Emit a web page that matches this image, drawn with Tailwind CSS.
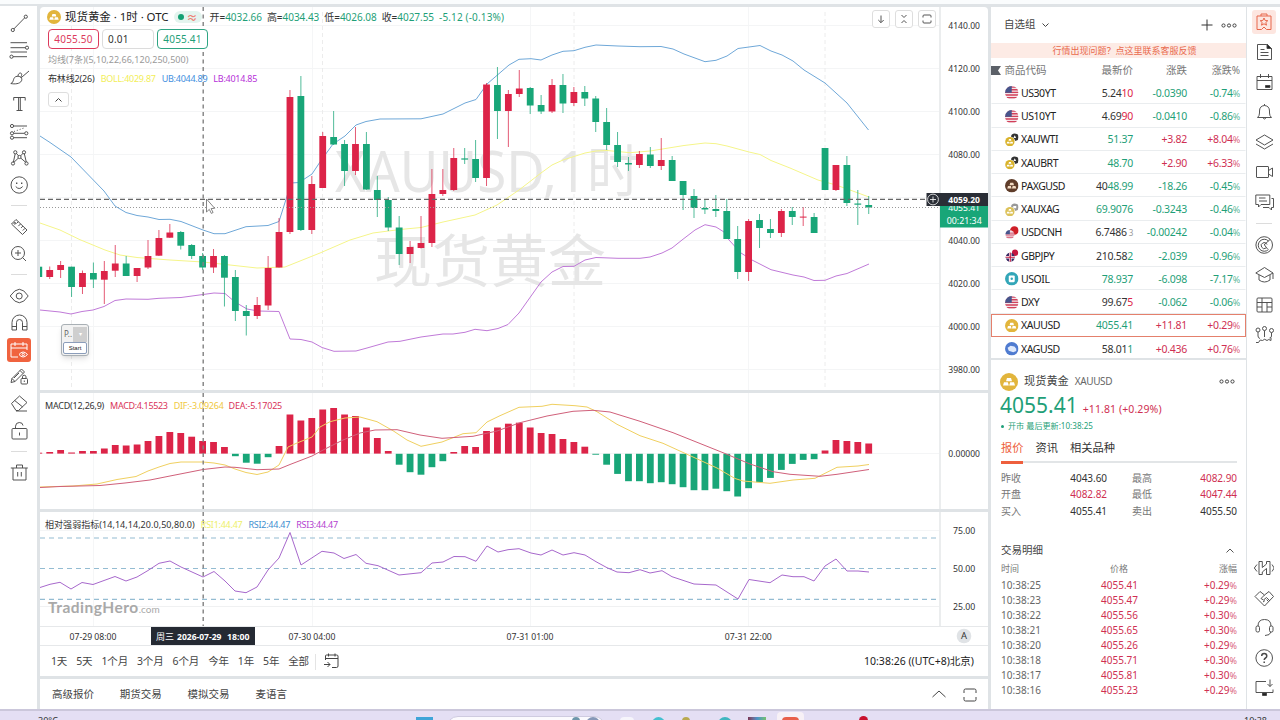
<!DOCTYPE html>
<html lang="zh-CN">
<head>
  <meta charset="UTF-8" />
  <meta name="viewport" content="width=device-width, initial-scale=1.0"/>
  <title>XAUUSD 现货黄金</title>
  <script src="https://cdn.jsdelivr.net/npm/@tailwindcss/browser@4"></script>
</head>
<body class="w-[1280px] h-[720px] overflow-hidden flex flex-col bg-[#dfe3e6] text-[#333] whitespace-nowrap font-['Noto_Sans','Noto_Sans_CJK_SC',sans-serif]">

  <div class="h-1 bg-[#fafcfd] shrink-0"></div>

  <div class="h-[705px] pt-[3px] flex shrink-0">

    <!-- drawing tools -->
    <div id="tools" class="w-[37px] mr-[3px] -mt-px pt-[3px] bg-white flex flex-col items-center"></div>

    <!-- chart column -->
    <div class="w-[948px] flex flex-col">
      <div class="h-[383px] flex bg-white relative rounded-t-sm overflow-hidden">
        <svg id="pricePane" class="w-[899px] h-[383px]" viewBox="40 7 899 383"></svg>
        <svg id="priceAxis" class="w-[49px] h-[383px]" viewBox="939 7 49 383"></svg>

        <div class="absolute left-2 top-[2px] leading-none">
          <div class="h-4 flex items-center">
            <svg class="size-[14px] -ml-[1px]" viewBox="0 0 18 18"><use href="#gold"/></svg>
            <span class="ml-[4px] text-[11.5px] tracking-[-0.05px] text-[#222]">现货黄金 · 1时 · OTC</span>
            <span class="ml-[5px] w-7 h-[12px] rounded-full bg-[#e3f4ee] flex items-center justify-between px-1">
              <i class="size-[6px] rounded-full bg-[#14a073]"></i>
              <b class="text-[11px] leading-none text-[#ee8074]">≈</b>
            </span>
            <span class="ml-[8px] text-[10px] tracking-[-0.04px]">开=<span class="text-[#1f9f78]">4032.66</span></span>
            <span class="ml-[5px] text-[10px] tracking-[-0.04px]">高=<span class="text-[#1f9f78]">4034.43</span></span>
            <span class="ml-[5px] text-[10px] tracking-[-0.04px]">低=<span class="text-[#1f9f78]">4026.08</span></span>
            <span class="ml-[5px] text-[10px] tracking-[-0.04px]">收=<span class="text-[#1f9f78]">4027.55</span></span>
            <span class="ml-[5px] text-[10px] tracking-[0.15px] text-[#1f9f78]">-5.12 (-0.13%)</span>
          </div>
          <div class="mt-1 flex gap-[3px] text-[10px] tracking-[0.2px]">
            <div class="w-[51px] h-5 rounded border border-[#dd3a5c] text-[#dd3a5c] bg-white flex items-center justify-center">4055.50</div>
            <div class="w-[52px] h-5 rounded border border-[#dcdcdc] bg-white flex items-center pl-[5px]">0.01</div>
            <div class="w-[51px] h-5 rounded border border-[#2fa583] text-[#1f9f78] bg-white flex items-center justify-center">4055.41</div>
          </div>
          <div class="mt-[4px] h-3 flex items-center text-[9px] tracking-[0.02px] text-[#999]">均线(7条)(5,10,22,66,120,250,500)</div>
          <div class="mt-[7px] h-3 flex items-center text-[9px] tracking-[-0.15px]">
            <span>布林线2(26)</span>
            <span class="ml-[6px] tracking-[-0.25px] text-[#f2ee58]">BOLL:4029.87</span>
            <span class="ml-[6px] tracking-[-0.25px] text-[#3f8fe0]">UB:4044.89</span>
            <span class="ml-[6px] tracking-[-0.25px] text-[#b62fd8]">LB:4014.85</span>
          </div>
          <div class="mt-2 w-[21px] h-[15px] rounded-[3px] border border-[#dedede] bg-white flex items-center justify-center">
            <svg class="w-[7px] h-[4px] fill-none stroke-[#444]" viewBox="0 0 7 4"><path d="M.5 3.5l3-3 3 3"/></svg>
          </div>
        </div>

        <!-- pane buttons -->
        <div class="absolute left-[832px] top-[3px] flex gap-[5px]">
          <div class="size-[18px] rounded-[3px] border border-[#dedede] bg-white"><svg class="size-4 fill-none stroke-[#555]" viewBox="0 0 16 16"><path d="M8 4.5v7M5.3 9L8 11.7 10.7 9"/></svg></div>
          <div class="size-[18px] rounded-[3px] border border-[#dedede] bg-white"><svg class="size-4 fill-none stroke-[#555]" viewBox="0 0 16 16"><path d="M5.5 4L8 6.5 10.5 4M5.5 12L8 9.5 10.5 12"/></svg></div>
          <div class="size-[18px] rounded-[3px] border border-[#dedede] bg-white"><svg class="size-4 fill-none stroke-[#555]" viewBox="0 0 16 16"><path d="M4 6.5V5q0-1 1-1h6q1 0 1 1v1.5M4 9.5V11q0 1 1 1h6q1 0 1-1V9.5"/></svg></div>
        </div>

        <!-- floating recorder widget -->
        <div class="absolute left-[21px] top-[317px] w-[28px] h-[32px] rounded-[3px] bg-[#f2f2f2] border border-[#a9b0b5] shadow-md p-px">
          <div class="h-[16px] flex items-center justify-between text-[8px] leading-none text-[#666]"><span class="pl-px">P..</span><span class="w-[14px] h-[15px] bg-[#cfcfcf] text-white text-center text-[6px] leading-[14px]">▾</span></div>
          <div class="h-[12px] rounded-[2px] border border-[#8b9dba] bg-white text-[6px] leading-[11px] text-center text-[#222] font-['Liberation_Sans']">Start</div>
        </div>
      </div>

      <div class="h-[116px] mt-[3px] flex bg-white relative">
        <svg id="macdPane" class="w-[899px] h-[116px]" viewBox="40 393 899 116"></svg>
        <svg id="macdAxis" class="w-[49px] h-[116px]" viewBox="939 393 49 116"></svg>
        <div class="absolute left-[5px] top-[7px] h-3 flex items-center text-[9px] tracking-[-0.22px]">
          <span>MACD(12,26,9)</span>
          <span class="ml-[6px] tracking-[-0.35px] text-[#d93358]">MACD:4.15523</span>
          <span class="ml-[6px] tracking-[-0.25px] text-[#f0c83c]">DIF:-3.09264</span>
          <span class="ml-[5px] tracking-[-0.2px] text-[#d93358]">DEA:-5.17025</span>
        </div>
      </div>

      <div class="h-[114px] mt-[3px] flex bg-white relative">
        <svg id="rsiPane" class="w-[899px] h-[114px]" viewBox="40 512 899 114"></svg>
        <svg id="rsiAxis" class="w-[49px] h-[114px]" viewBox="939 512 49 114"></svg>
        <div class="absolute left-[5px] top-[7px] h-3 flex items-center text-[9px] tracking-[0.05px]">
          <span>相对强弱指标(14,14,14,20.0,50,80.0)</span>
          <span class="ml-[6px] tracking-[-0.25px] text-[#eef06a]">RSI1:44.47</span>
          <span class="ml-[6px] tracking-[-0.25px] text-[#3f8fd0]">RSI2:44.47</span>
          <span class="ml-[6px] tracking-[-0.25px] text-[#b33fd0]">RSI3:44.47</span>
        </div>
        <div class="absolute left-2 top-[88px] leading-none text-[#a9a9a9] flex items-baseline">
          <b class="text-[15.5px] tracking-[0.5px] font-['Lato']">TradingHero</b><span class="text-[10px] font-['Lato']">.com</span>
        </div>
      </div>

      <svg id="timeAxis" class="w-[948px] h-[20px] bg-white shrink-0" viewBox="40 626 948 20"></svg>

      <div class="h-[30px] bg-white flex items-center pt-[2px] pl-[11px] pr-[14px] text-[10.5px] text-[#444]">
        <div class="flex gap-[9px] tracking-[-0.15px]">
          <span>1天</span><span>5天</span><span>1个月</span><span>3个月</span><span>6个月</span><span>今年</span><span>1年</span><span>5年</span><span>全部</span>
        </div>
        <i class="w-px h-4 bg-[#e4e4e4] ml-[6px]"></i>
        <svg class="ml-[6px] -mt-[2px] size-[18px] fill-none stroke-[#444]" viewBox="0 0 18 18"><path d="M3.5 8V4q0-1 1-1h10q1.5 0 1.5 1v10q0 1.5-1.5 1.5H10M3.5 6.5H16M6.5 1.5v3M13 1.5v3M2 12.5h6M5.5 10L8 12.5 5.5 15"/></svg>
        <span class="ml-auto text-[10.5px] text-[#222] tracking-[0px]">10:38:26 ((UTC+8)北京)</span>
      </div>

      <div class="h-[30px] mt-[3px] bg-white flex items-center pt-[2px] pl-3 pr-[11px] text-[10.5px] text-[#444]">
        <div class="flex gap-[25.8px]"><span>高级报价</span><span>期货交易</span><span>模拟交易</span><span>麦语言</span></div>
        <svg class="ml-auto -mt-[2px] w-[14px] h-2 fill-none stroke-[#444]" viewBox="0 0 14 8"><path d="M.5 7L7 1l6.5 6"/></svg>
        <svg class="ml-[17px] size-[14px] fill-none stroke-[#444]" viewBox="0 0 14 14"><path d="M1 5V2.5Q1 1 2.5 1h9Q13 1 13 2.5V5M1 9v2.5Q1 13 2.5 13h9q1.5 0 1.5-1.5V9"/></svg>
      </div>
    </div>

    <!-- watch list and quote -->
    <div class="w-[255px] ml-[3px] flex flex-col">
      <div class="h-[351px] bg-white overflow-hidden">
        <div class="h-[36px] flex items-center px-[13px] text-[10.5px] text-[#444]">
          <span>自选组</span>
          <svg class="ml-[6px] w-[7px] h-[5px] fill-none stroke-[#444]" viewBox="0 0 7 5"><path d="M.5 .5l3 3 3-3"/></svg>
          <svg class="ml-auto size-3 fill-none stroke-[#333]" viewBox="0 0 12 12"><path d="M6 .5v11M.5 6h11"/></svg>
          <svg class="ml-[8px] -mr-[4px] w-[16px] h-[5px] fill-none stroke-[#444]" viewBox="0 0 16 5"><circle cx="2.5" cy="2.5" r="1.6"/><circle cx="8" cy="2.5" r="1.6"/><circle cx="13.5" cy="2.5" r="1.6"/></svg>
        </div>
        <div class="h-[15px] bg-[#fdebe5] text-[#e9694c] text-[9px] flex items-center justify-center pl-3">行情出现问题？点这里联系客服反馈</div>
        <div class="h-[23px] flex items-center pt-[2px] text-[10.5px] text-[#777] pr-[6px]">
          <svg class="w-[10px] h-[9px] fill-[#5b6068]" viewBox="0 0 10 9"><path d="M0 0h10L7 4.5 10 9H0z"/></svg>
          <span class="w-[78px] pl-[3.5px]">商品代码</span>
          <span class="w-[54px] text-right">最新价</span>
          <span class="w-[54px] text-right">涨跌</span>
          <span class="grow text-right text-[10px]">涨跌%</span>
        </div>
        <div id="watchList"></div>
      </div>

      <div class="grow mt-[2px] bg-white pl-[10px] pr-[9px]">
        <div class="h-[35px] pt-[8px] flex items-center text-[#444]">
          <svg class="size-[18px] -ml-[1px]" viewBox="0 0 18 18"><use href="#gold"/></svg>
          <span class="ml-[6px] text-[11.2px]">现货黄金</span>
          <span class="ml-[6px] text-[10px] tracking-[-0.4px] text-[#666]">XAUUSD</span>
          <svg class="ml-auto mr-[2px] w-[16px] h-[5px] fill-none stroke-[#444]" viewBox="0 0 16 5"><circle cx="2.5" cy="2.5" r="1.6"/><circle cx="8" cy="2.5" r="1.6"/><circle cx="13.5" cy="2.5" r="1.6"/></svg>
        </div>
        <div class="h-[18px] flex items-end leading-none">
          <span class="-ml-px text-[21px] leading-[16px] text-[#1f9f78]">4055.41</span>
          <span class="ml-[5px] text-[10.5px] leading-[7px] tracking-[0.1px] text-[#cf2f52]">+11.81 (+0.29%)</span>
        </div>
        <div class="h-[15px] mt-[5.5px] flex items-center text-[8.1px] text-[#1f9f78]"><i class="size-[3px] rounded-full bg-[#1f9f78] mr-[4px]"></i>开市 最后更新:10:38:25</div>
        <div class="h-[22px] mt-[4px] flex items-center gap-[12px] text-[11.25px] text-[#333]"><span class="text-[#ee5f3d]">报价</span><span>资讯</span><span>相关品种</span></div>
        <div class="h-[2px] mt-[2px] bg-[#e2e5e7]"><div class="w-[22px] h-[3px] -mt-px bg-[#ee5f3d]"></div></div>
        <div class="mt-[7.5px] grid grid-cols-[40px_66px_25px_1fr] auto-rows-[16.5px] items-center text-[10px] tracking-[-0.05px]">
          <span class="text-[#777]">昨收</span><span class="text-right">4043.60</span><span></span><div class="flex justify-between"><span class="text-[#777]">最高</span><span class="text-[#cf2f52]">4082.90</span></div>
          <span class="text-[#777]">开盘</span><span class="text-right text-[#cf2f52]">4082.82</span><span></span><div class="flex justify-between"><span class="text-[#777]">最低</span><span class="text-[#cf2f52]">4047.44</span></div>
          <span class="text-[#777]">买入</span><span class="text-right">4055.41</span><span></span><div class="flex justify-between"><span class="text-[#777]">卖出</span><span>4055.50</span></div>
        </div>
        <div class="mt-[22.5px] h-[17px] flex items-center justify-between text-[10.5px] text-[#444]">
          <span>交易明细</span>
          <svg class="mr-[3px] w-[8px] h-[5px] fill-none stroke-[#555]" viewBox="0 0 8 5"><path d="M.5 4.5L4 1l3.5 3.5"/></svg>
        </div>
        <div class="h-[18.5px] flex items-center text-[9px] text-[#777]"><span class="w-[118px]">时间</span><span class="-ml-[9px]">价格</span><span class="ml-auto">涨幅</span></div>
        <div id="ticks"></div>
      </div>
    </div>

    <div id="side" class="grow ml-px bg-white flex flex-col items-center"></div>
  </div>

  <!-- taskbar, cut by the bottom of the screen -->
  <div class="h-[11px] shrink-0 overflow-hidden border-t-2 border-[#cbc7db] bg-[#e4dff4] relative">
    <span class="absolute left-[38px] top-[5px] text-[9px] leading-[9px]">30°C</span>
    <div class="absolute left-[416px] top-[6px] w-[17px] h-4 bg-[#3fa5d8]"></div>
    <div class="absolute left-[446px] top-[5px] w-[160px] h-6 rounded-full bg-[#fbfafe] border border-[#cfcbe0]"></div>
    <div class="absolute left-[572px] top-[6px] w-[8px] h-4 rounded-full bg-[#6f97ab]"></div>
    <div class="absolute left-[586px] top-[6px] w-[14px] h-4 rounded-full bg-[#8798b8]"></div>
    <div class="absolute left-[620px] top-[6px] w-[14px] h-4 rounded bg-[#f6f5fb]"></div>
    <div class="absolute left-[652px] top-[6px] w-[13px] h-4 rounded-full bg-[#43c0d0]"></div>
    <div class="absolute left-[682px] top-[6px] w-[8px] h-4 rounded-full bg-[#b9a94e]"></div>
    <div class="absolute left-[718px] top-[6px] w-[14px] h-4 rounded-full bg-[#3fb6c0]"></div>
    <div class="absolute left-[748px] top-[6px] w-[18px] h-4 bg-linear-to-r from-[#7a3555] via-[#4a90c8] to-[#79c06a]"></div>
    <div class="absolute left-[777px] top-[1px] w-[27px] h-6 rounded bg-[#f7f1f6]"></div>
    <div class="absolute left-[782px] top-[6px] w-[17px] h-4 rounded-sm bg-[#e8604a]"></div>
    <div class="absolute left-[859px] top-[5px] size-[9px] rounded-full bg-[#c8102e]"></div>
    <span class="absolute left-[1244px] top-[5px] text-[9px] leading-[9px]">10:38</span>
  </div>

  <!-- shared symbols -->
  <svg class="absolute size-0">
    <clipPath id="round"><circle cx="9" cy="9" r="9"/></clipPath>
    <symbol id="gold" viewBox="0 0 18 18"><circle cx="9" cy="9" r="9" fill="#e2b53c"/><path d="M7 5h4l1 3.2H6zM4 9.3h3.8l1 3.2H3zM10.2 9.3H14l1 3.2H9.2z" fill="#fff"/></symbol>
    <symbol id="silver" viewBox="0 0 18 18"><circle cx="9" cy="9" r="9" fill="#4f7bd0"/><path d="M3.5 7.5l4-2.5 5 1 2.5 3v3l-4 1.500-6-2z" fill="#dfe9fb"/></symbol>
    <symbol id="us" viewBox="0 0 18 18"><g clip-path="url(#round)"><path d="M0 0h18v18H0z" fill="#f3e6ea"/><path d="M0 1.5h18M0 5h18M0 8.5h18M0 12h18M0 15.5h18" stroke="#d2405a" stroke-width="1.7"/><path d="M0 0h9v9H0z" fill="#47558c"/></g></symbol>
    <symbol id="golddark" viewBox="0 0 18 18"><circle cx="13" cy="5.5" r="5" fill="#333"/><path d="M13 3l1.8 3.5h-3.6z" fill="#fff"/><circle cx="6.5" cy="11.5" r="7" fill="#fff"/><circle cx="6.5" cy="11.5" r="6.2" fill="#d9b32c"/><path d="M5.3 8h2.6l.6 2.3H4.7zM2.8 11.5h3l.6 2.5H2.2zM7.2 11.5h3l.6 2.5H6.6z" fill="#fff"/></symbol>
    <symbol id="goldsilver" viewBox="0 0 18 18"><circle cx="13" cy="5.5" r="5" fill="#999"/><path d="M11 4h4v3h-4z" fill="#fff"/><circle cx="6.5" cy="11.5" r="7" fill="#fff"/><circle cx="6.5" cy="11.5" r="6.2" fill="#dcc25a"/><path d="M5.3 8h2.6l.6 2.3H4.7zM2.8 11.5h3l.6 2.5H2.2zM7.2 11.5h3l.6 2.5H6.6z" fill="#fff"/></symbol>
    <symbol id="paxg" viewBox="0 0 18 18"><circle cx="9" cy="9" r="9" fill="#5f3d2a"/><path d="M7 5h4l1 3.2H6zM4 9.3h3.8l1 3.2H3zM10.2 9.3H14l1 3.2H9.2z" fill="#f3dcc4"/></symbol>
    <symbol id="uscn" viewBox="0 0 18 18"><circle cx="12.5" cy="6" r="5.8" fill="#cf1f28"/><circle cx="6.5" cy="11.5" r="6" fill="#f0dfe6"/><path d="M2 15h9M1 12h11.5M6 9.5h6" stroke="#d2405a" stroke-width="1.2"/><path d="M.8 9.5A6 6 0 0 1 6.5 5.5V11H.6z" fill="#47558c"/></symbol>
    <symbol id="gbjp" viewBox="0 0 18 18"><circle cx="13.5" cy="5" r="4.2" fill="#c5163f"/><circle cx="7" cy="11" r="6" fill="#3a2c66"/><path d="M7 5v12M1 11h12" stroke="#fff" stroke-width="3.4"/><path d="M7 5v12M1 11h12" stroke="#c5163f" stroke-width="1.6"/></symbol>
    <symbol id="oil" viewBox="0 0 18 18"><circle cx="9" cy="9" r="9" fill="#33a6b8"/><rect x="5" y="4.5" width="8" height="9" rx="1.5" fill="#fff"/><circle cx="9" cy="9" r="1.6" fill="#33a6b8"/></symbol>
  </svg>

  <script>
    const RED = '#dc2448', GREEN = '#18a678';
    const X0 = 38.8, STEP = 10.92;
    const barX = i => X0 + STEP * i;

    // high, body top, body bottom, low, r = up / g = down (pane coordinates)
    const candles = [
      [266,266.7,277,277,'g'],[266.5,270,277,279,'r'],[261,265,270,278,'r'],[266.7,266.7,287,297,'g'],[270.5,273,287,294,'r'],
      [262.5,273,279.5,288,'g'],[261,271,279.7,304,'r'],[245,263.5,270.7,277,'r'],[256,263.5,276,276,'g'],[268,268,276,282,'r'],
      [240,256,267.5,269,'r'],[230,238,255.7,256,'r'],[224,232.5,237.7,238,'r'],[231,232,245.7,249.5,'g'],[244,245,256,259,'g'],
      [253,256,267.5,270,'g'],[249,256,267.5,273,'r'],[255,256,277.7,306.5,'g'],[270,277,311,321,'g'],[305,311,316,335.5,'g'],
      [297,305,316,319,'r'],[256,268,305.5,310,'r'],[218,232,267.5,267.5,'r'],[90,97,232,234,'r'],[76,96,230,231,'g'],
      [176,184,230,234,'r'],[132,136,188,188,'r'],[111,137,144.5,145,'g'],[140,144,171,186,'g'],[127,144,171,175,'r'],
      [132,144,189.5,190,'g'],[176,190,200,217,'g'],[197,200,227.5,231,'g'],[216,227.5,254,265,'g'],[241,247,254,263,'r'],
      [216,243,248,248.5,'r'],[169,194,243,247,'r'],[169,190,194,196,'r'],[148,158,190,191,'r'],[148,158.4,159.6,164,'g'],
      [140,159,178,182,'g'],[83,84.5,178,186,'r'],[67,85,111,139,'g'],[90,94,111,147,'r'],[70,88.5,94,97,'r'],
      [87,88,105.5,114,'g'],[95,105,111.5,114,'g'],[79,85,111.5,113,'r'],[74,85,103.5,113,'g'],[87,92,103,106,'r'],
      [86,92,98.5,106,'g'],[96,98.5,122,132,'g'],[108,122,145,150,'g'],[132,145,162,167,'g'],[157,163,164.5,171,'g'],
      [151,154,165,168,'r'],[147,154.5,166,168,'g'],[138,160,166,170,'r'],[156,160,181,181,'g'],[181,181,195,210,'g'],
      [189,196,208,218,'g'],[200,208,209.5,214,'g'],[195,209,211,217,'g'],[199,211,239,239,'g'],[226,239,272,279,'g'],
      [219,221,272,281,'r'],[214,220,228,248,'g'],[219,229,233,238,'g'],[209,211,233,237,'r'],[207,211,217,225,'g'],
      [207,216.6,217.6,226,'r'],[213,217,233,233,'g'],[148,148,190,190,'g'],[165,165,190,191,'r'],[156,165,203,206,'g'],
      [190,203.5,204.7,225,'g'],[196,205,207.5,214,'g']
    ];

    // far end of each histogram bar
    const macd = [452.7,452,450,452.5,451,451,448.5,445,445.5,444.5,441,436,432,433,436.7,441,442,447,456,462.5,463.5,457,446,414.5,420.5,418,409.5,408,414.5,416,427.5,438,451,464.5,472,474.5,467,461,452,446,447,431,427.5,423.7,422.7,427.5,433,434,439,442,446.7,454.5,464.5,473.7,481,481,483,482,484,487,490,490,488.5,491,496.3,488,482,477.7,469.7,463.7,459.7,459,450.5,440,441,442,443.5];

    const upper = '40,136 50,142.5 71,157 104,191 115,206 126,212.5 137,215.5 148,217 159,219.5 170,219.3 181,221.5 203,230 214,233.7 225,233.7 246,226.7 268,225.5 279,221.5 288,193 291,183 299,182.5 312,174 320,162 333,144 345,136 356,125 366,121.5 380,119 421,118.8 443,114 465,103 476,99.5 487,84 509,65 519,59.3 531,58.7 541,60 552,55 563,51.3 574,50.7 585,47.3 596,45 618,46 640,46.7 661,46.5 673,49 684,54 705,61.7 716,60.3 727,56 738,48.5 760,45.5 771,51 782,55 793,61 804,70 825,83 847,103 868.5,130';
    const middle = '40,223 60,230 80,239.7 105,250 120,255 137,257.5 170,260 203,262 230,265 257,268 285,267 300,261 320,253 350,240 373,233 400,229.5 421,227.5 443,222 475,215 497,205 519,190 541,173 552,165 563,160 585,153 596,151 607,150.5 630,152.7 650,151 684,145.5 705,143 716,143.7 727,146 749,152 760,154.5 771,160.5 790,168 818,180 836,185 850,190 869,197';
    const lower = '40,310 60,312 71,314 82,311.5 93,310 104,306.5 115,300.5 126,299 148,299.3 159,298.3 181,297.5 203,294.5 214,293 225,293.5 235,302 247,309 258,311 279,311.5 290,339 301,339.5 312,342 322,347.5 334,351.3 356,351 367,348 388,342 400,341.3 421,337 443,334 453,334 465,332.3 475,329.3 487,330.7 498,328.5 508,324.5 519,313 541,282 552,272 563,266.5 574,266.3 585,260 596,257.5 618,258.3 640,258.3 650,257 662,253 672,248 682,240 695,230 705,224.7 716,227 724,232 729,240 741,253 752,260 771,269.7 793,275 804,277 814,280.5 825,280.3 836,276 847,273.5 869,264';
    const dif = '40,487 73,486 97,484 117,479.5 136,476.5 148,471 159,467 170,463.5 181,462 203,462 214,463 225,465 235,469 246,472.5 257,474.5 268,472 279,465 288,447 297,443 312,437 320,427 330,421.7 345,418 360,417 377,421.7 393,430.7 407,440 421,446.3 442,442 463,433.7 476,432.7 487,422 500,415.7 519,407.3 542,406.3 552,404.3 575,405.7 587,407 597,411.7 617,424.3 640,435.7 663,443.3 693,457 717,468 735,478.5 743,481 770,483.3 793,480 815,478.3 825,473.3 837,467.3 858,466 869,464.5';
    const dea = '40,487.5 60,486.5 100,485.5 125,483 150,480 170,476 203,469.5 225,467 235,467.3 257,469.7 279,469 290,464.5 312,456 325,449 343,440 360,433 375,430 397,429.7 420,435 442,438.3 473,436.3 497,431 520,422.7 547,416 573,411.3 593,410.3 610,412 640,421.3 673,432.7 723,452.7 750,464 773,471.7 790,474.3 820,476.3 837,474.3 869,469.5';
    const rsi = '40,587.5 50,584.3 60,582.3 71,589 82,582.5 93,584.5 115,576.5 126,581 137,577 148,570.5 159,563.3 170,561 181,567 203,577 214,571.5 225,581 235,591 246,592.7 257,587 268,570 279,558 290,532.5 301,565 322,551.3 334,553 344,558.5 356,554.5 366,563.3 378,565.7 399,575 421,572.7 432,563 443,562 454,556.5 465,556.7 476,561.3 487,546 498,552 508,549.7 519,548.7 531,553 541,555 552,550 563,555 574,552.7 585,555 596,561.7 607,567.7 617,572 629,572.7 640,569.7 650,573 662,570.7 672,576.7 694,584 716,585 738,599 749,579.5 770,582.7 782,575 793,576.7 804,576.7 814,581 825,566 836,559 847,571 858,571 869,572';

    const line = (pts, color) => `<polyline points="${pts}" fill="none" stroke="${color}" stroke-width="1"/>`;
    const hline = (y, color, extra = '') => `<path d="M40 ${y}H939" stroke="${color}" ${extra}/>`;
    const vline = (x, y1, y2, color, extra = '') => `<path d="M${x} ${y1}V${y2}" stroke="${color}" ${extra}/>`;
    const label = (x, y, t, len, extra = 'fill="#333" font-size="9"') => `<text x="${x}" y="${y}" textLength="${len}" lengthAdjust="spacingAndGlyphs" ${extra}>${t}</text>`;
    const set = (id, html) => document.getElementById(id).innerHTML = html;

    function grid(y1, y2) {
      return [93.5, 312.5, 530.5, 748.5].map(x => vline(x, y1, y2, '#f5f6f7')).join('');
    }
    function crosshair(y1, y2) {
      return vline(203.2, y1, y2, '#808080', 'stroke-width="1.4" stroke-dasharray="4 3.5"');
    }

    function renderPrice() {
      let s = grid(7, 390);
      [25.5, 68.5, 111.5, 154.5, 197.5, 240.5, 283.5, 326.5, 369.5].forEach(y => s += hline(y, '#f4f5f6'));
      [71.5, 322.5, 574, 825].forEach(x => s += vline(x, 12, 390, '#ececec', 'stroke-dasharray="4 3"'));
      s += label(335, 192, 'XAUUSD,1时', 305, 'fill="#e6e6e6" font-size="57"');
      s += label(374, 282, '现货黄金', 232, 'fill="#e6e6e6" font-size="57"');
      s += line(upper, '#6fa8d8') + line(middle, '#f5f58a') + line(lower, '#c07ad8');
      candles.forEach(([hi, top, bot, lo, c], i) => {
        const color = c === 'r' ? RED : GREEN, x = barX(i);
        s += `<path d="M${x} ${hi}V${lo}" stroke="${color}" stroke-width="1" opacity=".75"/>`;
        s += `<rect x="${x - 3.4}" y="${top}" width="6.8" height="${bot - top}" fill="${color}"/>`;
      });
      s += hline(207.5, '#999', 'stroke-dasharray="1 2"');
      s += hline(199.3, '#666', 'stroke-width="1.3" stroke-dasharray="5 3"');
      s += crosshair(7, 390);
      s += '<path d="M206.5 199v13l2.8-2.6 2 4 1.8-.9-2-3.9 3.6-.3z" fill="#fff" stroke="#666" stroke-width=".8"/>';
      s += '<rect x="926.5" y="193" width="13" height="13" fill="#2a2e36"/><circle cx="933" cy="199.5" r="5.4" fill="none" stroke="#fff" stroke-width=".8"/><path d="M930 199.5h6M933 196.5v6" stroke="#fff" stroke-width=".8"/>';
      set('pricePane', s);

      s = '<path d="M940 7V390" stroke="#e4e7e9" stroke-width="1.5"/>';
      ['4140', '4120', '4100', '4080', '', '4040', '4020', '4000', '3980'].forEach((v, i) => {
        if (v) s += label(948.3, 28.5 + i * 43.05, v + '.00', 31.7);
      });
      s += '<rect x="940" y="203" width="48" height="24.5" fill="#18a678"/>';
      s += label(948.3, 211, '4055.41', 31.7, 'fill="#fff" font-size="9"');
      s += label(946.7, 223.8, '00:21:34', 35, 'fill="#fff" font-size="9"');
      s += '<rect x="939" y="193" width="49" height="13" fill="#2a2e36"/>';
      s += label(948.3, 202.5, '4059.20', 31.7, 'fill="#fff" font-size="9" font-weight="700"');
      set('priceAxis', s);
    }

    function renderMacd() {
      let s = grid(393, 509) + hline(453.5, '#f4f5f6');
      macd.forEach((y, i) => {
        const up = y < 453.5;
        s += `<rect x="${barX(i) - 3.4}" y="${up ? y : 453.8}" width="6.8" height="${Math.max(0.8, Math.abs(y - 453.6))}" fill="${up ? RED : GREEN}"/>`;
      });
      s += line(dif, '#f0d060') + line(dea, '#d0607a') + crosshair(393, 509);
      set('macdPane', s);
      set('macdAxis', '<path d="M940 393V509" stroke="#e4e7e9" stroke-width="1.5"/>' + label(948.3, 456.8, '0.00000', 31.7));
    }

    function renderRsi() {
      let s = grid(512, 626) + hline(530.5, '#f4f5f6') + hline(606.5, '#f0f1f2');
      [538, 568.5, 599.3].forEach(y => s += hline(y, '#94bcd2', 'stroke-width="1.2" stroke-dasharray="5 4"'));
      s += line(rsi, '#a768cc') + crosshair(512, 626);
      set('rsiPane', s);
      set('rsiAxis', '<path d="M940 512V626" stroke="#e4e7e9" stroke-width="1.5"/>' +
        label(953, 533.5, '75.00', 22.3) + label(953, 572, '50.00', 22.3) + label(953, 610, '25.00', 22.3));
    }

    function renderTime() {
      let s = '<path d="M40 626.5H988M40 645.5H988" stroke="#e6e8ea"/>';
      s += label(69.5, 639.5, '07-29 08:00', 47) + label(288.5, 639.5, '07-30 04:00', 47) + label(506.5, 639.5, '07-31 01:00', 47) + label(724.8, 639.5, '07-31 22:00', 47);
      s += '<rect x="151" y="627" width="104" height="18" fill="#252a33"/>';
      s += label(156, 639.5, '周三', 18, 'fill="#fff" font-size="9"');
      s += label(177, 639.5, '2026-07-29', 44.5, 'fill="#fff" font-size="9" font-weight="700"');
      s += label(227, 639.5, '18:00', 22.5, 'fill="#fff" font-size="9" font-weight="700"');
      s += '<circle cx="964" cy="636" r="7.3" fill="#e0e3e6"/>' + label(961, 639.3, 'A', 6);
      set('timeAxis', s);
    }

    const watch = [
      ['us', 'US30YT', '5.24', '10', '', '-0.0390', '-0.74', 'r'],
      ['us', 'US10YT', '4.69', '90', '', '-0.0410', '-0.86', 'r'],
      ['golddark', 'XAUWTI', '', '51.37', '', '+3.82', '+8.04', 'g'],
      ['golddark', 'XAUBRT', '', '48.70', '', '+2.90', '+6.33', 'g'],
      ['paxg', 'PAXGUSD', '40', '48.99', '', '-18.26', '-0.45', 'g'],
      ['goldsilver', 'XAUXAG', '', '69.9076', '', '-0.3243', '-0.46', 'g'],
      ['uscn', 'USDCNH', '6.7486', '', '3', '-0.00242', '-0.04', 'g'],
      ['gbjp', 'GBPJPY', '210.58', '2', '', '-2.039', '-0.96', 'g'],
      ['oil', 'USOIL', '', '78.937', '', '-6.098', '-7.17', 'g'],
      ['us', 'DXY', '99.67', '5', '', '-0.062', '-0.06', 'r'],
      ['gold', 'XAUUSD', '', '4055.41', '', '+11.81', '+0.29', 'g'],
      ['silver', 'XAGUSD', '58.01', '1', '', '+0.436', '+0.76', 'g']
    ];

    function renderWatch() {
      set('watchList', watch.map(([icon, name, a, b, tail, chg, pct, c]) => {
        const tone = chg[0] === '+' ? 'text-[#cf2f52]' : 'text-[#1f9f78]';
        const frame = name === 'XAUUSD' ? 'border border-[#e4806c]' : 'border border-transparent border-b-[#eaedef]';
        return `
        <div class="h-[23.25px] flex items-center pt-[2px] pl-[13px] pr-[5px] text-[10.5px] tracking-[-0.25px] ${frame}">
          <svg class="size-[13.5px] -mt-px" viewBox="0 0 18 18"><use href="#${icon}"/></svg>
          <span class="w-[61.5px] pl-[2.5px] tracking-[-0.45px] text-[#222]">${name}</span>
          <span class="w-[53px] text-right">${a}<span class="${c === 'r' ? 'text-[#dc2448]' : 'text-[#1f9f78]'}">${b}</span><span class="text-[8px] text-[#999]">${tail ? ' ' + tail : ''}</span></span>
          <span class="w-[54px] text-right ${tone}">${chg}</span>
          <span class="grow text-right ${tone}">${pct}<span class="text-[9px] opacity-75">%</span></span>
        </div>`;
      }).join(''));
    }

    const ticks = [
      ['25', '5.41', '29'], ['23', '5.47', '29'], ['22', '5.56', '30'], ['21', '5.65', '30'],
      ['20', '5.26', '29'], ['18', '5.71', '30'], ['17', '5.81', '30'], ['16', '5.23', '29']
    ];

    function renderTicks() {
      set('ticks', ticks.map(([sec, price, pct]) => `
        <div class="h-[15px] flex items-center text-[10px] text-[#cf2f52]">
          <span class="w-[100px] text-[#666] tracking-[0.05px]">10:38:${sec}</span>
          <span>405${price}</span>
          <span class="ml-auto">+0.${pct}<span class="text-[9px] opacity-75">%</span></span>
        </div>`).join(''));
    }

    const dot = (x, y, r = 1.6) => `<circle cx="${x}" cy="${y}" r="${r}" fill="#fff"/>`;
    const toolIcons = [
      '<path d="M3.8 17L16.8 3.7"/>' + dot(3.8, 17) + dot(16.8, 3.7),
      '<path d="M1.5 2.7H18M1.5 7.7H17M1.5 12H18M3 16.7h15"/>' + dot(18, 7.7) + dot(2.5, 16.7),
      '<path d="M1.8 16.5C5.5 15.5 3.2 10 8 9.3c3-.4 5.8 1.7 4.5 4.5-1.5 3.2-7 3.5-10.7 2.7zM9 9.2c-.2-2.5 2.5-4.2 3.5-2.5 1 1.7-1 2.2-.3 4L20 4"/>',
      '<path d="M4.7 6.5V3.5h11.5v3M9.6 3.5v13M11.3 3.5v13M7.5 16.5h6"/>',
      '<path d="M3 5h15M3 12.3h13M3 16.7h15"/><path d="M5 10.5l10-3.5" stroke-dasharray="1 2"/>' + dot(3, 5) + dot(3, 12.3) + dot(17.3, 12.3) + dot(3, 16.7),
      '<path d="M4.2 15L6.5 4.3l4 4.7 4.5-4.7L17.5 15M4.2 15l6.3-6 7 6"/>' + dot(4, 15.5) + dot(6.3, 4.3) + dot(10.5, 9) + dot(15, 4.3) + dot(17.5, 15.5),
      '<circle cx="10.2" cy="10" r="8.2"/><path d="M6.7 11.5q3.5 4 7 0"/><path d="M7.7 7.5v1.5M12.7 7.5v1.5" stroke-width="1.3"/>',
      '-',
      '<path d="M2.5 7L7 2.5 18 13l-4.5 4.5zM9.3 4.7L7.5 6.5M11.6 6.9L9.4 9.1M13.9 9.1l-1.8 1.8M16 11.3l-2.2 2.2"/><circle cx="5.8" cy="6.3" r=".9"/>',
      '<circle cx="9" cy="9" r="6.5"/><path d="M13.7 13.7L17 17M6 9h6M9 6v6"/>',
      '-',
      '<path d="M1.2 10q9.3-13.5 18 0-8.7 13.5-18 0z"/><circle cx="10.2" cy="10" r="3"/>',
      '<path d="M3 17V9.5a7.500 7.5 0 0 1 15 0V17h-4.5V9.5a3 3 0 0 0-6 0V17zM3 13.5h4.5M13.5 13.5H18"/>',
      'active',
      '<path d="M2 15.5l1-4L12.5 2l3 3L6 14.5zM11 3.5l3 3M3 11.5l3 3M5 11l5-5"/><rect x="12" y="11.5" width="6.5" height="5.5" rx="1" fill="#fff"/><path d="M13.5 11.5V9.8q0-1.6 1.7-1.6T17 9.8v1.7M15.3 13.5v1.5"/>',
      '<path d="M2.5 9.5L10.5 2l7.5 6.5-8.5 8H7zM5.7 6.5l8 6.5M7 17h11"/>',
      '<rect x="3" y="7.5" width="15" height="10.5" rx="1"/><path d="M6.5 7.5V5.2Q6.8 1.5 10.3 1.5T14 4.5M10.5 11.5v3"/>',
      '-',
      '<path d="M1.8 5h17M7.5 5V2h6v3M4 5v12h13V5M8.700 9v4.5M12.3 9v4.5"/>'
    ];

    function renderTools() {
      set('tools', toolIcons.map(d => {
        if (d === '-') return '<div class="h-[15px] flex items-center"><i class="w-4 h-px bg-[#dcdcdc]"></i></div>';
        if (d === 'active') return `<div class="h-[27px] flex items-center"><div class="size-6 rounded-[3px] bg-[#f0633f] flex items-center justify-center">
          <svg class="size-5 fill-none stroke-white" viewBox="0 0 20 20"><path d="M9 17H2V4h16v6M2 8h16M6 2v4M14 2v4M10 14.5q4-5 8.5 0-4.5 5-8.5 0z"/><circle cx="14.2" cy="14.5" r="1.2"/></svg></div></div>`;
        return `<div class="h-[27px] flex items-center"><svg class="size-5 fill-none stroke-[#4a4a4a] stroke-[0.95]" viewBox="0 0 20 20">${d}</svg></div>`;
      }).join(''));
    }

    const sideIcons = [
      'active',
      '<path d="M12.5 2.5h-9v15h14V6.5zM6.5 7.5h4M6.5 10.5h8M6.5 13.5h8"/><path d="M13 2v4.5h4.5z" fill="#222"/>',
      '<path d="M3 4.5h15v13H3zM3 8.5h15M6.5 2v4M14.5 2v4"/><path d="M11.5 13.5h4.5v2h-4.5z" fill="#222"/>',
      '<path d="M3.5 15.5q2-1.5 2-4.5V9q0-5 5-5.5 5 .5 5 5.5v2q0 3 2 4.5zM10.5 3.5V2M8.5 15.5q2 3 4 0"/>',
      '<path d="M2 8l8.5-5L19 8l-8.5 5zM2 12l8.5 5L19 12"/>',
      '<rect x="2.5" y="4.5" width="12" height="11" rx=".5"/><path d="M14.5 8.5l4-2.5v8.5l-4-2.5"/>',
      '<path d="M1.8 3h14v9.5H7l-2.5 2.5v-2.5H1.8zM5 6h6.5M5 9h8M17.5 6.5h2v9h-2v2.5L15 15.5H9"/>',
      '-',
      '<circle cx="10.2" cy="10" r="8.3"/><path d="M14.5 6a6 6 0 1 0 0 8.5M13 9.5a3 3 0 1 0-1 3.5M10 10l6-5.5M10.5 10l3 4"/>',
      '<path d="M1.8 8L10.5 2.5 19 8l-8.5 4.5zM5 10v5q5.5 4 11 0v-5M19 8v6"/>',
      '<rect x="3" y="3" width="15" height="14" rx="1"/><path d="M3 7.5h15M8 3v14M13 7.5v9.5M3 12h5M13 12h5"/>',
      '<path d="M4 6.5V11q0 2 2 2.500M10.500 5.5V12M17.5 7.5V11q0 2-2 2M2 17.5h2.500q1.500-4 4-2 2-2.500 4.500 0 1.500-2 4 0v-2.500"/>' + dot(4, 5, 2) + dot(10.5, 3.5, 2) + dot(17.5, 5.5, 2),
      'gap',
      '<path d="M3 6.5L.3 10 3 13.500M18 6.5l2.2 3.5L18 13.5M5 3.5h3.3V9.5L12.5 6V3.5H16v13h-3.5v-6L8.3 14v2.5H5z"/>',
      '<path d="M1 8.5L6 3.5l4.5 3.5L15 3.5l4.5 5L10.5 18zM10.5 7L7 10.5l2.5 1.5 3-2.5 3.5 3.5M9 14l2-1.5M12.5 11.5l2 2"/>',
      '<path d="M4 8q0-6.5 6.5-6.5T17 8M17 14q-1 3.5-6 3.5"/><rect x="2" y="8" width="3.5" height="6" rx="1.5"/><rect x="15.5" y="8" width="3.5" height="6" rx="1.5"/>',
      '<circle cx="10.2" cy="10" r="8.3"/><path d="M7.7 8q0-2.5 2.5-2.5T12.8 8q0 1.2-1.3 2t-1.3 2M10.2 13.5V15" stroke-width="1.5"/>',
      '<path d="M12 3.5H2v11h17v-3M16 1.5v7M13.5 6L16 8.5 18.5 6"/><path d="M8.5 15h4v2.5h-4z" fill="#222"/>'
    ];

    function renderSide() {
      set('side', sideIcons.map(d => {
        if (d === '-') return '<div class="h-[12.5px] flex items-center"><i class="w-4 h-px bg-[#dcdcdc]"></i></div>';
        if (d === 'gap') return '<div class="h-[203.5px]"></div>';
        if (d === 'active') return `<div class="h-[30px] shrink-0 flex items-center"><div class="size-6 rounded-[3px] bg-[#fde6e0] flex items-center justify-center">
          <svg class="size-5 fill-none stroke-[#e8664a]" viewBox="0 0 20 20"><path d="M3 4h14v13.5H12.5L10 15l-2.5 2.5H3zM7 4V2h6v2M10 6l1.2 2.5 2.6.2-2 1.8.7 2.7L10 11.8l-2.5 1.4.7-2.7-2-1.8 2.6-.2z"/></svg></div></div>`;
        return `<div class="h-[30px] shrink-0 flex items-center"><svg class="size-5 fill-none stroke-[#4a4a4a] stroke-[0.95]" viewBox="0 0 20 20">${d}</svg></div>`;
      }).join(''));
    }

    renderPrice();
    renderMacd();
    renderRsi();
    renderTime();
    renderWatch();
    renderTicks();
    renderTools();
    renderSide();
  </script>
</body>
</html>
